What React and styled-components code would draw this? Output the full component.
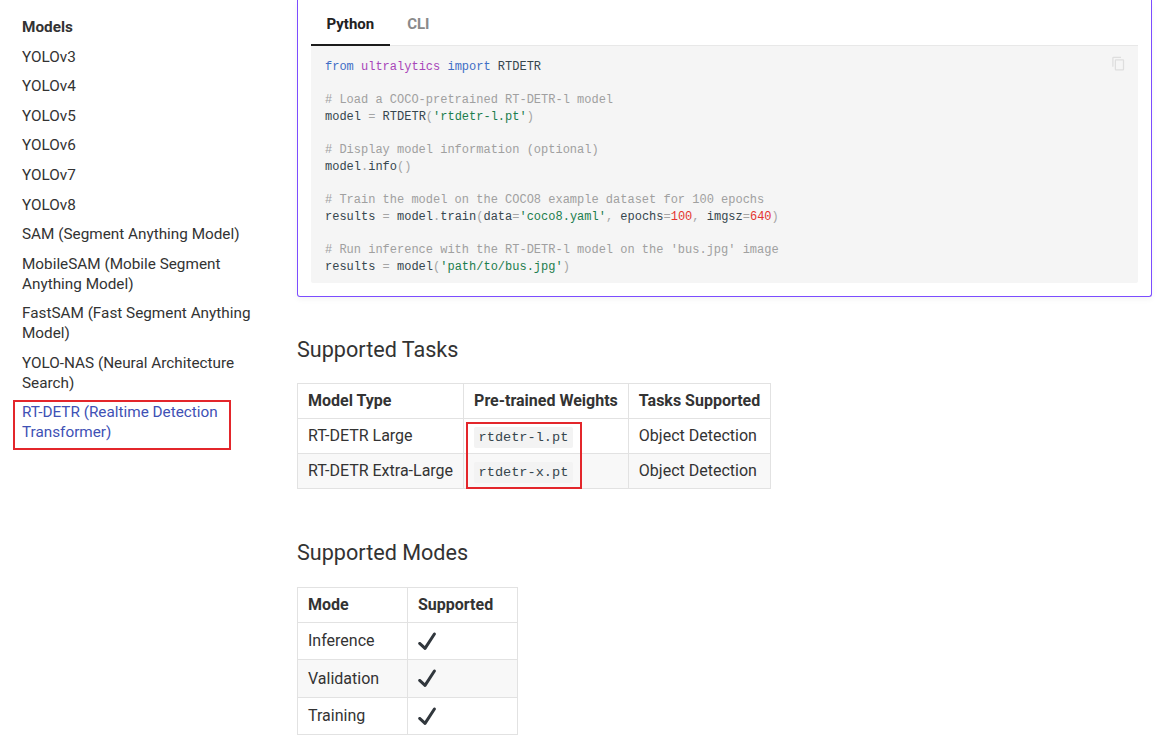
import styled, { createGlobalStyle } from 'styled-components';

const GlobalStyle = createGlobalStyle`
    body {
        margin: 0;
        background: #fff;
        font-family: Roboto, 'Noto Sans', sans-serif;
        color: #333;
        -webkit-font-smoothing: antialiased;
    }
`;

const Page = styled.div`
    display: flex;
    align-items: flex-start;
    width: 1157px;
`;

const Sidebar = styled.nav`
    box-sizing: border-box;
    width: 297px;
    flex-shrink: 0;
    padding: 17px 36px 0 22px;
`;

const NavTitle = styled.div`
    font-size: 15.3px;
    line-height: 20px;
    font-weight: 700;
    color: #333;
`;

const NavList = styled.ul`
    list-style: none;
    margin: 0;
    padding: 0;
`;

const NavItem = styled.li`
    margin-top: 9.6px;
    font-size: 15.3px;
    line-height: 20px;
`;

const NavLink = styled.a`
    display: block;
    text-decoration: none;
    color: ${(p) => (p.$active ? '#4051b5' : '#333')};
    ${(p) =>
        p.$active &&
        `
        margin: -3px 0 0 -9px;
        width: 197px;
        padding: 0 10px 6px 7px;
        border: 2px solid #e3262b;
    `}
`;

const Main = styled.main`
    flex: 1;
    padding-right: 5px;
`;

const CodeCard = styled.div`
    border: 1px solid #7c4dff;
    border-top: none;
    border-radius: 0 0 3px 3px;
    padding: 0 13px 13px;
    box-shadow: 0 2px 6px rgba(0, 0, 0, 0.05);
`;

const Tabs = styled.div`
    display: flex;
    gap: 2px;
    border-bottom: 1px solid #e8e8e8;
`;

const Tab = styled.div`
    height: 46px;
    padding: 4px 15.5px 0;
    box-sizing: border-box;
    display: flex;
    align-items: center;
    font-size: 15px;
    font-weight: 700;
    color: ${(p) => (p.$active ? '#222' : '#8a8a8a')};
    border-bottom: 2px solid ${(p) => (p.$active ? '#1c1c1c' : 'transparent')};
    margin-bottom: -1px;
`;

const CodeBlock = styled.pre`
    position: relative;
    margin: 0;
    background: #f5f5f5;
    padding: 13px 14px 7px;
    font-family: 'Liberation Mono', 'DejaVu Sans Mono', monospace;
    font-size: 12px;
    line-height: 16.67px;
    color: #36464e;
    border-radius: 0 0 2px 2px;
`;

const CopyButton = styled.svg`
    position: absolute;
    top: 10px;
    right: 12px;
    width: 15px;
    height: 15px;
    fill: #dedede;
`;

const tokenColors = {
    kw: '#3f6ec6',
    ns: '#a846b9',
    c: '#a0a0a0',
    s: '#1c7d4d',
    n: '#e3342f',
    p: '#a5a5a5',
    t: '#36464e',
};

const Token = styled.span`
    color: ${(p) => tokenColors[p.$k]};
`;

const SectionTitle = styled.h2`
    margin: 39px 0 19px;
    font-size: 21.6px;
    line-height: 28.6px;
    font-weight: 400;
    color: #333;
`;

const TableWrap = styled.div`
    position: relative;
    display: inline-block;
    vertical-align: top;
`;

const Table = styled.table`
    border-collapse: collapse;
    font-size: 16px;
    line-height: 18px;
    color: #333;

    th,
    td {
        border: 1px solid #e2e2e2;
        padding: 8px 10px;
        text-align: left;
        vertical-align: middle;
    }

    th {
        min-width: 89px;
        font-weight: 700;
        background: #fff;
    }

    tbody tr:nth-child(2n) {
        background: #f8f8f8;
    }
`;

const InlineCode = styled.code`
    font-family: 'Liberation Mono', 'DejaVu Sans Mono', monospace;
    font-size: 13.6px;
    line-height: 14px;
    padding: 3px 4.5px;
    background: #f3f3f3;
    border-radius: 2px;
    color: #36464e;
`;

const Highlight = styled.div`
    position: absolute;
    left: 169px;
    top: 39px;
    width: 116px;
    height: 67px;
    box-sizing: border-box;
    border: 2px solid #e3262b;
    pointer-events: none;
`;

const ModesTitle = styled(SectionTitle)`
    margin-top: 50px;
`;

const Check = styled.svg`
    display: block;
    width: 18px;
    height: 18px;
    margin: 1px 0 1.5px;
`;

const models = [
    'YOLOv3',
    'YOLOv4',
    'YOLOv5',
    'YOLOv6',
    'YOLOv7',
    'YOLOv8',
    'SAM (Segment Anything Model)',
    'MobileSAM (Mobile Segment Anything Model)',
    'FastSAM (Fast Segment Anything Model)',
    'YOLO-NAS (Neural Architecture Search)',
    'RT-DETR (Realtime Detection Transformer)',
];

const code = [
    [['kw', 'from'], ['t', ' '], ['ns', 'ultralytics'], ['t', ' '], ['kw', 'import'], ['t', ' RTDETR']],
    [],
    [['c', '# Load a COCO-pretrained RT-DETR-l model']],
    [['t', 'model '], ['p', '='], ['t', ' RTDETR'], ['p', '('], ['s', "'rtdetr-l.pt'"], ['p', ')']],
    [],
    [['c', '# Display model information (optional)']],
    [['t', 'model'], ['p', '.'], ['t', 'info'], ['p', '()']],
    [],
    [['c', '# Train the model on the COCO8 example dataset for 100 epochs']],
    [
        ['t', 'results '], ['p', '='], ['t', ' model'], ['p', '.'], ['t', 'train'], ['p', '('],
        ['t', 'data'], ['p', '='], ['s', "'coco8.yaml'"], ['p', ','], ['t', ' epochs'], ['p', '='],
        ['n', '100'], ['p', ','], ['t', ' imgsz'], ['p', '='], ['n', '640'], ['p', ')'],
    ],
    [],
    [['c', "# Run inference with the RT-DETR-l model on the 'bus.jpg' image"]],
    [['t', 'results '], ['p', '='], ['t', ' model'], ['p', '('], ['s', "'path/to/bus.jpg'"], ['p', ')']],
];

const CheckMark = () => (
    <Check viewBox="0 0 36 36">
        <path
            fill="#31373D"
            d="M34.459 1.375c-1.391-.902-3.248-.506-4.149.884L13.5 28.170l-8.198-7.58c-1.217-1.125-3.114-1.051-4.239.166-1.125 1.216-1.051 3.115.166 4.239l10.764 9.952s.309.266.452.359c.504.328 1.070.484 1.630.484.982 0 1.945-.482 2.520-1.368L35.343 5.524c.902-1.390.506-3.248-.884-4.149z"
        />
    </Check>
);

function App() {
    return (
        <Page>
            <GlobalStyle />
            <Sidebar>
                <NavTitle>Models</NavTitle>
                <NavList>
                    {models.map((m, i) => (
                        <NavItem key={m}>
                            <NavLink href="#" $active={i === models.length - 1}>
                                {m}
                            </NavLink>
                        </NavItem>
                    ))}
                </NavList>
            </Sidebar>
            <Main>
                <CodeCard>
                    <Tabs>
                        <Tab $active>Python</Tab>
                        <Tab>CLI</Tab>
                    </Tabs>
                    <CodeBlock>
                        <CopyButton viewBox="0 0 24 24">
                            <path d="M19 21H8V7h11m0-2H8a2 2 0 0 0-2 2v14a2 2 0 0 0 2 2h11a2 2 0 0 0 2-2V7a2 2 0 0 0-2-2m-3-4H4a2 2 0 0 0-2 2v14h2V3h12V1z" />
                        </CopyButton>
                        {code.map((line, i) => (
                            <div key={i}>
                                {line.length === 0
                                    ? '\u00a0'
                                    : line.map(([k, text], j) => (
                                          <Token key={j} $k={k}>
                                              {text}
                                          </Token>
                                      ))}
                            </div>
                        ))}
                    </CodeBlock>
                </CodeCard>

                <SectionTitle>Supported Tasks</SectionTitle>
                <TableWrap>
                    <Table>
                        <thead>
                            <tr>
                                <th>Model Type</th>
                                <th>Pre-trained Weights</th>
                                <th>Tasks Supported</th>
                            </tr>
                        </thead>
                        <tbody>
                            <tr>
                                <td>RT-DETR Large</td>
                                <td>
                                    <InlineCode>rtdetr-l.pt</InlineCode>
                                </td>
                                <td>Object Detection</td>
                            </tr>
                            <tr>
                                <td>RT-DETR Extra-Large</td>
                                <td>
                                    <InlineCode>rtdetr-x.pt</InlineCode>
                                </td>
                                <td>Object Detection</td>
                            </tr>
                        </tbody>
                    </Table>
                    <Highlight />
                </TableWrap>

                <ModesTitle>Supported Modes</ModesTitle>
                <Table>
                    <thead>
                        <tr>
                            <th>Mode</th>
                            <th>Supported</th>
                        </tr>
                    </thead>
                    <tbody>
                        {['Inference', 'Validation', 'Training'].map((m) => (
                            <tr key={m}>
                                <td>{m}</td>
                                <td>
                                    <CheckMark />
                                </td>
                            </tr>
                        ))}
                    </tbody>
                </Table>
            </Main>
        </Page>
    );
}

export default App;
